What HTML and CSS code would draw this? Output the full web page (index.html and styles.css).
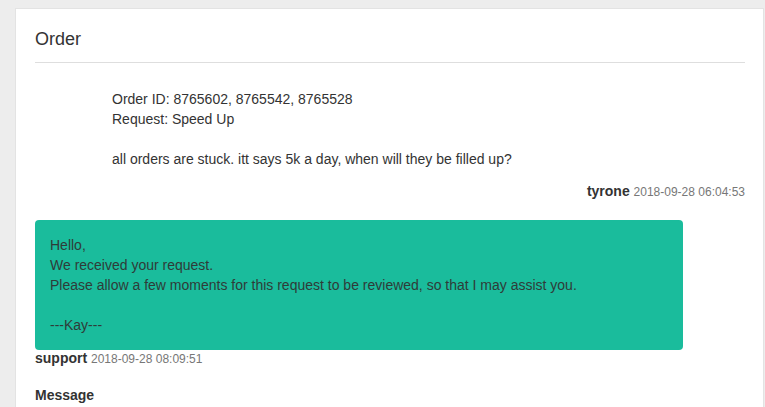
FILE: index.html
```html
<!DOCTYPE html>
<html>
<head>
<meta charset="utf-8">
<link rel="stylesheet" href="styles.css">
</head>
<body>
<div class="panel">
  <h3 class="title">Order</h3>
  <div class="thread">
    <div class="user-msg">
      Order ID: 8765602, 8765542, 8765528<br>
      Request: Speed Up<br>
      <br>
      all orders are stuck. itt says 5k a day, when will they be filled up?
    </div>
    <div class="meta meta-right"><b class="name">tyrone</b> <span class="time">2018-09-28 06:04:53</span></div>
    <div class="support-msg">
      Hello,<br>
      We received your request.<br>
      Please allow a few moments for this request to be reviewed, so that I may assist you.<br>
      <br>
      ---Kay---
    </div>
    <div class="meta meta-left"><b class="name">support</b> <span class="time">2018-09-28 08:09:51</span></div>
    <div class="label">Message</div>
  </div>
</div>
</body>
</html>
```

FILE: styles.css
```css
html, body {
  margin: 0;
  padding: 0;
}
body {
  background: #ededed;
  font-family: "Liberation Sans", Arial, sans-serif;
  font-size: 14px;
  line-height: 20px;
  color: #333;
  padding: 8px 1px 0 15px;
  height: 407px;
  box-sizing: border-box;
  overflow: hidden;
}
.panel {
  background: #fff;
  border: 1px solid #e3e3e3;
  border-bottom: none;
  padding: 20px 18px 0 19px;
  height: 399px;
  box-sizing: border-box;
  overflow: hidden;
}
.title {
  margin: 0;
  font-size: 18px;
  font-weight: normal;
  line-height: 20px;
  color: #333;
  padding-bottom: 13px;
  border-bottom: 1px solid #dedede;
}
.thread {
  padding-top: 26px;
}
.user-msg {
  padding-left: 77px;
}
.meta {
  line-height: 17px;
}
.meta-right {
  text-align: right;
  margin-top: 14px;
  margin-bottom: 19px;
}
.name {
  font-weight: bold;
  color: #333;
}
.time {
  font-size: 12px;
  color: #777;
}
.support-msg {
  width: 648px;
  box-sizing: border-box;
  background: #1abc9c;
  border-radius: 4px;
  padding: 15px;
  color: #2f3b38;
}
.label {
  font-weight: bold;
  margin-top: 18px;
  line-height: 18px;
}
```
